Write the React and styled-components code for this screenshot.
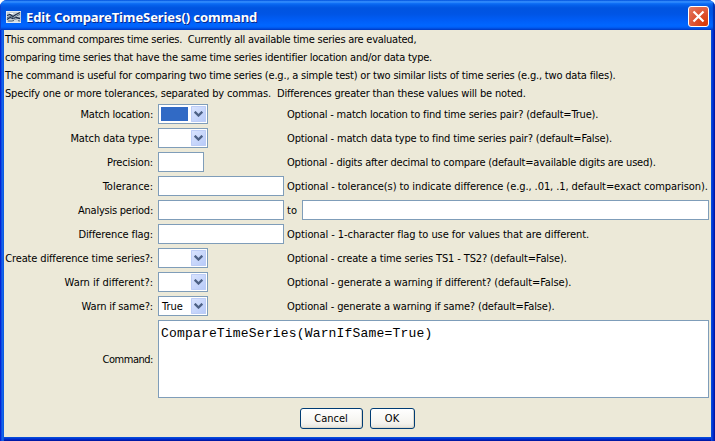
import React from 'react';
import styled, { createGlobalStyle } from 'styled-components';

const GlobalStyle = createGlobalStyle`
  * { box-sizing: border-box; }
  body { margin: 0; background: #fff; overflow: hidden; }
`;

const Window = styled.div`
  width: 715px;
  height: 441px;
  display: flex;
  flex-direction: column;
  border-radius: 7px 7px 0 0;
  overflow: hidden;
  background: #0046e0;
  color: #000;
  font: 11px/18px 'DejaVu Sans Condensed', 'DejaVu Sans', sans-serif;
`;

const TitleBar = styled.header`
  height: 30px;
  flex: none;
  display: flex;
  align-items: center;
  padding: 3px 6px 0 6px;
  box-shadow: inset 1px 0 #0a3fd0, inset -2px 0 1px #0030b0;
  background: linear-gradient(
    to bottom,
    #0058e6 0, #3d95ff 2px, #1273f8 3px, #0561ec 5px, #0054e0 8px,
    #0055e5 14px, #005df6 20px, #0066ff 25px, #0062fa 27px, #0048d8 29px, #003cc4 30px
  );
`;

const Title = styled.h1`
  flex: 1;
  margin: 0 0 0 5px;
  color: #fff;
  font: bold 13px/20px 'Noto Sans', sans-serif;
  letter-spacing: -0.1px;
  text-shadow: 1px 1px 0 #0a2a8c;
  white-space: pre;
`;

const CloseButton = styled.button`
  width: 21px;
  height: 21px;
  padding: 0;
  display: grid;
  place-items: center;
  border: 1px solid #fff;
  border-radius: 3px;
  background: radial-gradient(circle at 85% 90%, #d83a06 0, #dc5030 45%, #e47c64 100%);
`;

const Body = styled.main`
  flex: 1;
  margin: 0 4px 4px;
  padding: 0 2px 0 1px;
  background: #ece9d8;
`;

const Frame = styled.div`
  flex: 1;
  display: flex;
  flex-direction: column;
  background:
    linear-gradient(to right, #0019cf 0, #0831d9 1px, #166aee 2px, #0855dd 4px) left / 4px 100% no-repeat,
    linear-gradient(to right, #0855dd 0, #0441d8 1px, #001dc0 3px, #00138c 4px) right / 4px 100% no-repeat,
    linear-gradient(to bottom, #0855dd 0, #0441d8 1px, #001dc0 3px, #00138c 4px) bottom / 100% 4px no-repeat;
`;

const Text = styled.span`
  white-space: pre;
  letter-spacing: ${(p) => p.$track || 0}px;
`;

const Intro = styled.div`
  display: flex;
  flex-direction: column;
  height: 72px;
  padding-top: 1px;
`;

const Row = styled.div`
  display: grid;
  grid-template-columns: 149px 126px 1fr;
  column-gap: 4px;
  align-items: center;
  height: 24px;
`;

const Label = styled(Text)`
  justify-self: end;
  padding: 2px 1px 0 0;
`;

const Note = styled(Text)`
  margin-left: -1px;
  padding-top: 2px;
`;

const Field = styled.div`
  width: ${(p) => p.$width || '126px'};
  height: 20px;
  border: 1px solid #7f9db9;
  background: #fff;
`;

const Range = styled.div`
  display: flex;
  align-items: center;
  justify-content: space-between;
`;

const Combo = styled.div`
  width: 50px;
  height: 20px;
  display: flex;
  align-items: center;
  gap: 3px;
  padding: 0 1px 0 2px;
  border: 1px solid #7f9db9;
  background: #fff;
`;

const ComboValue = styled.div`
  width: 27px;
  height: 14px;
  padding-left: 1px;
  line-height: 16px;
  background: ${(p) => (p.$selected ? '#316ac5' : '#fff')};
`;

const ComboArrow = styled.div`
  width: 15px;
  height: 16px;
  display: grid;
  place-items: center;
  border-radius: 1px;
  box-shadow: inset 0 0 0 1px #bdcdf6;
  background: linear-gradient(135deg, #dbe5fe, #b6c9f8);
`;

const CommandRow = styled.div`
  display: grid;
  grid-template-columns: 149px 551px;
  column-gap: 4px;
  align-items: center;
  height: 78px;
  margin-top: 2px;
`;

const CommandBox = styled.div`
  height: 78px;
  padding: 4px 2px;
  border: 1px solid #7f9db9;
  background: #fff;
  font: 13px/18px 'Liberation Mono', monospace;
  letter-spacing: 0.18px;
`;

const Buttons = styled.footer`
  display: flex;
  gap: 7px;
  margin: 10px 0 0 295px;
`;

const Button = styled.button`
  width: ${(p) => p.$width};
  height: 21px;
  padding: 0 1px 0 0;
  border: 1px solid #003c74;
  border-radius: 3px;
  background: linear-gradient(to bottom, #fff, #f4f3ee 75%, #e6e3da);
  box-shadow: inset -1px -1px #dcd8cc;
  color: #000;
  font: inherit;
  line-height: 18px;
`;

const intro = [
  ['This command compares time series.\u00a0 Currently all available time series are evaluated,', -0.25],
  ['comparing time series that have the same time series identifier location and/or data type.', -0.232],
  ['The command is useful for comparing two time series (e.g., a simple test) or two similar lists of time series (e.g., two data files).', -0.198],
  ['Specify one or more tolerances, separated by commas.\u00a0 Differences greater than these values will be noted.', -0.162],
];

const rows = [
  { label: ['Match location:', -0.23], kind: 'combo', selected: true, note: ['Optional - match location to find time series pair? (default=True).', -0.19] },
  { label: ['Match data type:', -0.1], kind: 'combo', note: ['Optional - match data type to find time series pair? (default=False).', -0.16] },
  { label: ['Precision:', -0.15], kind: 'field', width: '46px', note: ['Optional - digits after decimal to compare (default=available digits are used).', -0.21] },
  { label: ['Tolerance:', 0], kind: 'field', note: ['Optional - tolerance(s) to indicate difference (e.g., .01, .1, default=exact comparison).', -0.08] },
  { label: ['Analysis period:', -0.24], kind: 'field', range: true },
  { label: ['Difference flag:', -0.1], kind: 'field', note: ['Optional - 1-character flag to use for values that are different.', -0.08] },
  { label: ['Create difference time series?:', -0.15], kind: 'combo', note: ['Optional - create a time series TS1 - TS2? (default=False).', -0.135] },
  { label: ['Warn if different?:', 0], kind: 'combo', note: ['Optional - generate a warning if different? (default=False).', -0.1] },
  { label: ['Warn if same?:', -0.14], kind: 'combo', value: 'True', note: ['Optional - generate a warning if same? (default=False).', -0.138] },
];

function AppIcon() {
  return (
    <svg width="15" height="12" viewBox="0 0 15 12" shapeRendering="crispEdges">
      <rect width="15" height="12" fill="#c4ced6" />
      <path d="M0 .5h15M0 11.5h15M.5 0v12" stroke="#e4eaf0" />
      <g fill="none" shapeRendering="auto">
        <path d="M1 4.5l3-1 3 2 3-2 4-2M1 8.5l3-2 3 1 3-1 4 1" stroke="#1c2c48" strokeWidth="1.3" />
        <path d="M1 6.5l4-1 3 2 3-3 3-1M2 10h4l3-1 5 1" stroke="#52677c" />
        <path d="M4 2.5h3M8 9.8h4" stroke="#fff" />
      </g>
    </svg>
  );
}

function ComboBox({ value, selected }) {
  return (
    <Combo>
      <ComboValue $selected={selected}>{value}</ComboValue>
      <ComboArrow>
        <svg width="9" height="6" viewBox="0 0 9 6">
          <path d="M.7 .7l3.8 3.8L8.3 .7" fill="none" stroke="#4d6185" strokeWidth="2.3" />
        </svg>
      </ComboArrow>
    </Combo>
  );
}

export default function App() {
  return (
    <Window>
      <GlobalStyle />
      <TitleBar>
        <AppIcon />
        <Title>Edit CompareTimeSeries() command</Title>
        <CloseButton aria-label="Close">
          <svg width="13" height="13" viewBox="0 0 13 13">
            <path d="M1.5 1.5l10 10M11.5 1.5l-10 10" stroke="#fff" strokeWidth="2.2" />
          </svg>
        </CloseButton>
      </TitleBar>
      <Frame>
        <Body>
          <Intro>
            {intro.map(([text, track]) => <Text key={text} $track={track}>{text}</Text>)}
          </Intro>
          {rows.map((row) => (
            <Row key={row.label[0]}>
              <Label $track={row.label[1]}>{row.label[0]}</Label>
              {row.kind === 'combo'
                ? <ComboBox value={row.value} selected={row.selected} />
                : <Field $width={row.width} />}
              {row.range
                ? <Range><Note>to</Note><Field $width="407px" /></Range>
                : <Note $track={row.note[1]}>{row.note[0]}</Note>}
            </Row>
          ))}
          <CommandRow>
            <Label $track={-0.46}>Command:</Label>
            <CommandBox>CompareTimeSeries(WarnIfSame=True)</CommandBox>
          </CommandRow>
          <Buttons>
            <Button $width="63px">Cancel</Button>
            <Button $width="45px">OK</Button>
          </Buttons>
        </Body>
      </Frame>
    </Window>
  );
}
